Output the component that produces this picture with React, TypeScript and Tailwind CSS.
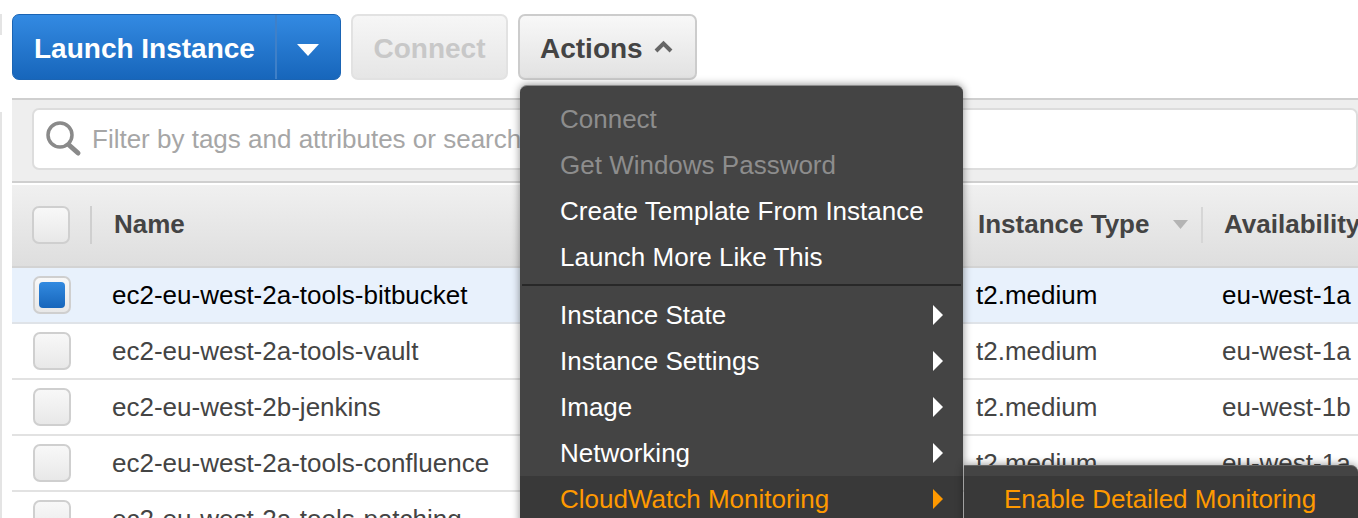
import React from 'react';

const font = { fontFamily: '"Liberation Sans", Arial, sans-serif' };

const rows = [
  { name: 'ec2-eu-west-2a-tools-bitbucket', type: 't2.medium', zone: 'eu-west-1a', selected: true },
  { name: 'ec2-eu-west-2a-tools-vault', type: 't2.medium', zone: 'eu-west-1a' },
  { name: 'ec2-eu-west-2b-jenkins', type: 't2.medium', zone: 'eu-west-1b' },
  { name: 'ec2-eu-west-2a-tools-confluence', type: 't2.medium', zone: 'eu-west-1a' },
  { name: 'ec2-eu-west-2a-tools-patching', type: 't2.medium', zone: 'eu-west-1a' },
];

const Checkbox: React.FC<{ checked?: boolean }> = ({ checked }) => (
  <div className="flex h-[38px] w-[38px] items-center justify-center rounded-[7px] border-2 border-[#cfcfcf] bg-gradient-to-b from-[#f8f8f8] to-[#e8e8e8]">
    {checked && <div className="h-[26px] w-[26px] rounded-[4px] bg-gradient-to-b from-[#328ae0] to-[#1766bb]" />}
  </div>
);

const Arrow: React.FC<{ className: string }> = ({ className }) => (
  <svg width="10" height="20" viewBox="0 0 10 20" className={className}>
    <path d="M0 0 L10 10 L0 20 Z" fill="currentColor" />
  </svg>
);

const MenuItem: React.FC<{ label: string; disabled?: boolean; arrow?: boolean; active?: boolean }> = ({
  label,
  disabled,
  arrow,
  active,
}) => (
  <div
    className={`flex h-[46px] items-center justify-between pl-[40px] pr-[20px] ${
      active ? 'bg-[#393939] text-[#ff9900]' : disabled ? 'text-[#8d8d8d]' : 'text-white'
    }`}
  >
    <span>{label}</span>
    {arrow && <Arrow className={active ? 'text-[#ff9900]' : 'text-white'} />}
  </div>
);

const App: React.FC = () => {
  return (
    <div className="relative h-[518px] w-[1358px] overflow-hidden bg-white text-[26px]" style={font}>
      <div className="absolute left-0 top-[14px] h-[21px] w-[2px] bg-[#e4e4e4]" />
      <div className="absolute bottom-0 left-0 top-[112px] w-[2px] bg-[#e4e4e4]" />

      <div className="ml-[12px] flex h-[98px] gap-[10px] pt-[14px] text-[28px] font-bold">
        <div className="flex h-[66px] w-[329px] items-center rounded-[7px] border border-[#1a64b4] bg-gradient-to-b from-[#338ae2] to-[#1766bb] text-white">
          <div className="flex h-full w-[264px] items-center border-r-2 border-[#3f80c8] pl-[21px] pt-[4px]">Launch Instance</div>
          <div className="flex flex-1 justify-center pr-[2px] pt-[5px]">
            <svg width="22" height="12" viewBox="0 0 22 12">
              <path d="M0 0 H22 L11 12 Z" fill="#fff" />
            </svg>
          </div>
        </div>
        <div className="flex h-[66px] w-[157px] items-center justify-center rounded-[7px] border-2 border-[#e2e2e2] bg-gradient-to-b from-[#f6f6f6] to-[#e6e6e6] pt-[4px] text-[#c8c8c8]">
          Connect
        </div>
        <div className="flex h-[66px] w-[179px] items-center gap-[11px] rounded-[7px] border-2 border-[#cccccc] bg-gradient-to-b from-[#f8f8f8] to-[#e2e2e2] pl-[20px] text-[#444444]">
          <span className="pt-[4px]">Actions</span>
          <svg width="19" height="13" viewBox="0 0 19 13" className="mb-[2px]">
            <path d="M2 11 L9.5 3.5 L17 11" fill="none" stroke="#666666" strokeWidth="4" />
          </svg>
        </div>
      </div>

      <div className="ml-[12px]">
        <div className="h-[85px] border-y-2 border-[#cfcfcf] bg-[#eeeeee] pl-[20px] pt-[8px]">
          <div className="flex h-[62px] items-center gap-[10px] rounded-[7px] border-2 border-[#dddddd] bg-white pl-[11px] text-[#a6a6a6]">
            <svg width="37" height="36" viewBox="0 0 37 36" fill="none">
              <circle cx="15" cy="14" r="12" stroke="#8a8a8a" strokeWidth="3.5" />
              <path d="M24 24 L33 32" stroke="#8a8a8a" strokeWidth="5" strokeLinecap="round" />
            </svg>
            Filter by tags and attributes or search
          </div>
        </div>

        <div className="grid h-[85px] grid-cols-[964px_246px_1fr] border-b-2 border-t-2 border-b-[#d3d3d3] border-t-white bg-gradient-to-b from-[#f0f0f0] to-[#dedede] pb-[2px] font-bold text-[#444444]">
          <div className="flex items-center pl-[20px]">
            <Checkbox />
            <div className="ml-[20px] h-[38px] w-[2px] bg-[#cfcfcf]" />
            <span className="ml-[22px]">Name</span>
          </div>
          <div className="flex items-center pl-[2px]">
            <span>Instance Type</span>
            <svg width="15" height="9" viewBox="0 0 15 9" className="ml-[24px]">
              <path d="M0 0 H15 L7.5 9 Z" fill="#b4b4b4" />
            </svg>
            <div className="ml-[13px] h-[36px] w-[2px] bg-[#d6d6d6]" />
          </div>
          <div className="flex items-center pl-[2px]">Availability</div>
        </div>

        {rows.map((row) => (
          <div
            key={row.name}
            className={`grid h-[56px] grid-cols-[964px_246px_1fr] items-center border-b-2 ${
              row.selected ? 'border-[#dfe3e8] bg-[#e8f1fc] text-black' : 'border-[#e2e2e2] bg-white text-[#444444]'
            }`}
          >
            <div className="flex items-center pl-[21px]">
              <Checkbox checked={row.selected} />
              <span className="ml-[41px]">{row.name}</span>
            </div>
            <span>{row.type}</span>
            <span>{row.zone}</span>
          </div>
        ))}
      </div>

      <div className="absolute left-[520px] top-[85px] h-[460px] w-[443px] rounded-[7px] border-t border-[#8c8c8c] bg-[#444444] pt-[10px] shadow-[0_0_8px_rgba(0,0,0,0.45)]">
        <MenuItem label="Connect" disabled />
        <MenuItem label="Get Windows Password" disabled />
        <MenuItem label="Create Template From Instance" />
        <MenuItem label="Launch More Like This" />
        <div className="mx-[2px] mb-[6px] mt-[4px] h-[2px] bg-[#282828]" />
        <MenuItem label="Instance State" arrow />
        <MenuItem label="Instance Settings" arrow />
        <MenuItem label="Image" arrow />
        <MenuItem label="Networking" arrow />
        <MenuItem label="CloudWatch Monitoring" arrow active />
      </div>

      <div className="absolute left-[964px] top-[465px] h-[80px] w-[394px] rounded-tr-[7px] border-t border-[#666666] bg-[#444444] pt-[10px] text-[#ff9900] shadow-[0_0_8px_rgba(0,0,0,0.45)]">
        <div className="h-[46px] bg-[#393939] pl-[40px] leading-[46px]">Enable Detailed Monitoring</div>
      </div>
    </div>
  );
};

export default App;
